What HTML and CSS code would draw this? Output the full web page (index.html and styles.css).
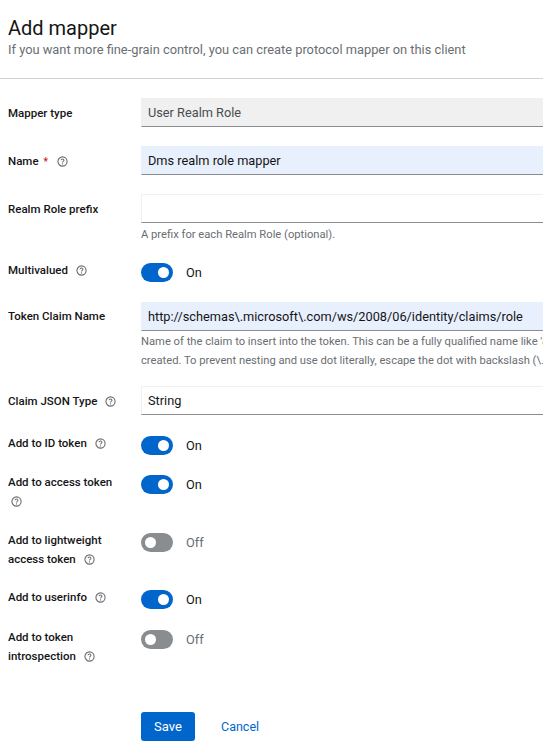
FILE: index.html
```html
<!DOCTYPE html>
<html>
<head>
<title>Add mapper</title>
<link rel="stylesheet" href="styles.css">
</head>
<body>
<svg class="defs" width="0" height="0">
  <symbol id="help" viewBox="0 0 12 12">
    <circle cx="6" cy="6" r="5" fill="none" stroke="currentColor" stroke-width="1.2"/>
    <path d="M4.4 4.7c0-1 .7-1.5 1.6-1.5s1.6.5 1.6 1.4c0 1.3-1.6 1.2-1.6 2.5" fill="none" stroke="currentColor" stroke-width="1.1"/>
    <circle cx="6" cy="8.7" r=".7" fill="currentColor"/>
  </symbol>
</svg>

<div class="header">
  <h1>Add mapper</h1>
  <p>If you want more fine-grain control, you can create protocol mapper on this client</p>
</div>

<form class="form">
  <div class="row">
    <div class="label">Mapper type</div>
    <div class="field"><div class="input disabled">User Realm Role</div></div>
  </div>
  <div class="row">
    <div class="label">Name <span class="req">*</span> <svg class="help"><use href="#help"/></svg></div>
    <div class="field"><div class="input filled">Dms realm role mapper</div></div>
  </div>
  <div class="row">
    <div class="label">Realm Role prefix</div>
    <div class="field">
      <div class="input"></div>
      <div class="helper one">A prefix for each Realm Role (optional).</div>
    </div>
  </div>
  <div class="row toggle-row">
    <div class="label">Multivalued <svg class="help"><use href="#help"/></svg></div>
    <div class="switch on"><span class="track"><span class="knob"></span></span>On</div>
  </div>
  <div class="row row-tight">
    <div class="label token-label">Token Claim Name</div>
    <div class="field">
      <div class="input filled">http://schemas\.microsoft\.com/ws/2008/06/identity/claims/role</div>
      <div class="helper">Name of the claim to insert into the token. This can be a fully qualified name like 'address.street'. In this case, a nested json object will be<br>created. To prevent nesting and use dot literally, escape the dot with backslash (\.).</div>
    </div>
  </div>
  <div class="row row-loose">
    <div class="label">Claim JSON Type <svg class="help"><use href="#help"/></svg></div>
    <div class="field"><div class="input">String</div></div>
  </div>
  <div class="row toggle-row">
    <div class="label">Add to ID token <svg class="help"><use href="#help"/></svg></div>
    <div class="switch on"><span class="track"><span class="knob"></span></span>On</div>
  </div>
  <div class="row toggle-row tall row-wide">
    <div class="label">Add to access token<br><svg class="help help-first"><use href="#help"/></svg></div>
    <div class="switch on"><span class="track"><span class="knob"></span></span>On</div>
  </div>
  <div class="row toggle-row tall">
    <div class="label">Add to lightweight<br>access token <svg class="help"><use href="#help"/></svg></div>
    <div class="switch"><span class="track"><span class="knob"></span></span>Off</div>
  </div>
  <div class="row toggle-row single">
    <div class="label">Add to userinfo <svg class="help"><use href="#help"/></svg></div>
    <div class="switch on"><span class="track"><span class="knob"></span></span>On</div>
  </div>
  <div class="row toggle-row tall">
    <div class="label">Add to token<br>introspection <svg class="help"><use href="#help"/></svg></div>
    <div class="switch"><span class="track"><span class="knob"></span></span>Off</div>
  </div>
  <div class="actions">
    <button type="button" class="save">Save</button>
    <a class="cancel" href="#">Cancel</a>
  </div>
</form>
</body>
</html>
```

FILE: styles.css
```css
html, body {
  margin: 0;
  height: 750px;
  overflow: hidden;
  background: #fff;
}

body {
  font-family: Roboto, "Liberation Sans", sans-serif;
  color: #151515;
}

.defs {
  display: block;
  height: 0;
}

.header {
  height: 79px;
  padding: 16px 0 0 8px;
  box-sizing: border-box;
  border-bottom: 1px solid #d2d2d2;
}

.header h1 {
  margin: 0;
  font-size: 20px;
  line-height: 24px;
  font-weight: 400;
}

.header p {
  margin: 0;
  font-size: 12.85px;
  line-height: 19px;
  color: #6a6e73;
  white-space: nowrap;
}

.form {
  padding: 19px 0 0 8px;
}

.row {
  display: grid;
  grid-template-columns: 133px 420px;
  margin-bottom: 19px;
}

.row-tight {
  margin-bottom: 16px;
}

.row-loose {
  margin-bottom: 21px;
}

.row-wide {
  margin-bottom: 20px;
}

.label {
  font-size: 11.5px;
  font-weight: 500;
  line-height: 19px;
  padding-top: 6px;
  padding-right: 8px;
}

.token-label {
  padding-top: 5px;
}

.req {
  color: #c9190b;
  font-size: 10px;
  margin: 0 1px 0 2px;
}

.help {
  width: 11px;
  height: 11px;
  margin-left: 5px;
  vertical-align: -2px;
  color: #6a6e73;
}

.help-first {
  margin-left: 3px;
}

.input {
  height: 29px;
  box-sizing: border-box;
  padding: 0 6px;
  font-size: 12.75px;
  line-height: 27px;
  white-space: nowrap;
  border: 1px solid #f0f0f0;
  border-bottom-color: #8a8d90;
}

.disabled {
  background: #f0f0f0;
  color: #484c51;
}

.filled {
  background: #e8f0fe;
  border-color: #e8f0fe;
  border-bottom-color: #8a8d90;
}

.helper {
  font-size: 11.2px;
  line-height: 19px;
  color: #6a6e73;
  white-space: nowrap;
  padding-top: 1px;
}

.helper.one {
  height: 19px;
  padding-top: 2px;
}

.toggle-row {
  min-height: 20px;
}

.toggle-row .label {
  padding-top: 0;
  margin-top: -2px;
}

.tall {
  min-height: 38px;
}

.single {
  min-height: 21px;
}

.switch {
  display: flex;
  align-items: flex-start;
  gap: 13px;
  font-size: 12.75px;
  line-height: 19px;
  color: #6a6e73;
}

.switch.on {
  color: #151515;
}

.track {
  display: flex;
  align-items: center;
  width: 32px;
  height: 19px;
  padding: 0 4px;
  box-sizing: border-box;
  border-radius: 10px;
  background: #8a8d90;
}

.on .track {
  background: #06c;
  justify-content: flex-end;
}

.knob {
  width: 11px;
  height: 11px;
  border-radius: 50%;
  background: #fff;
}

.actions {
  display: flex;
  align-items: center;
  gap: 26px;
  margin-top: 44px;
  padding-left: 133px;
}

.save {
  width: 54px;
  height: 29px;
  border: 0;
  border-radius: 3px;
  background: #06c;
  color: #fff;
  font: inherit;
  font-size: 13px;
  padding: 0;
}

.cancel {
  font-size: 12.5px;
  color: #06c;
  text-decoration: none;
}
```
